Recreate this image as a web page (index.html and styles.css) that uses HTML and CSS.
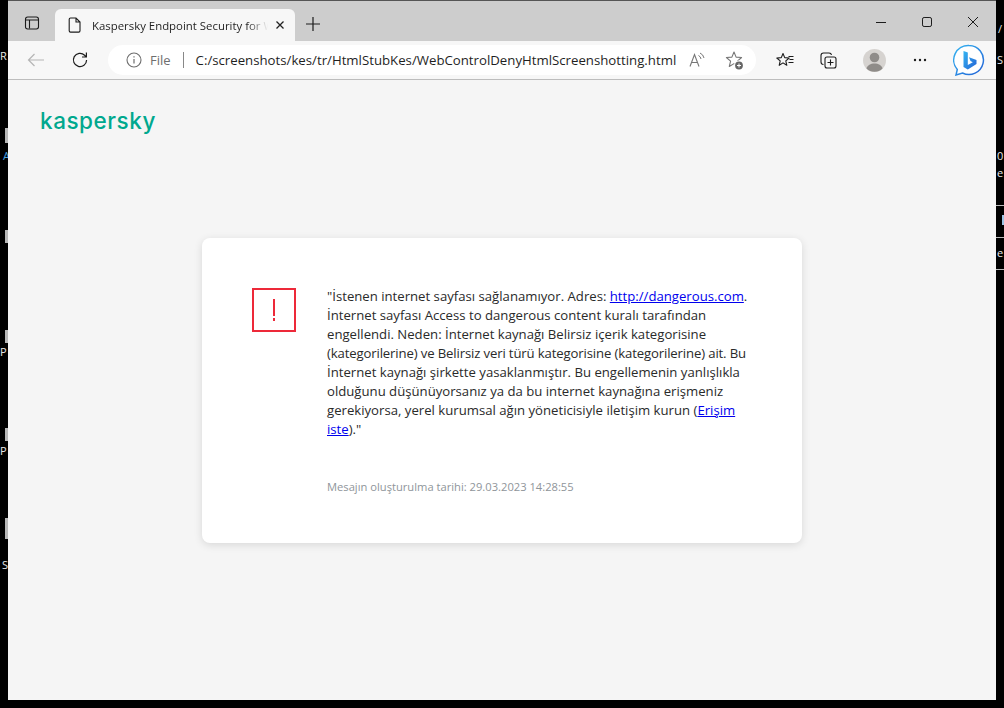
FILE: index.html
```html
<!DOCTYPE html>
<html lang="tr">
<head>
<meta charset="utf-8">
<title>Kaspersky Endpoint Security for Windows</title>
<link rel="stylesheet" href="styles.css">
</head>
<body>
<div class="desk">
  <span class="frag l1">R</span>
  <span class="bar b1"></span><span class="frag l2">A</span>
  <span class="bar b2"></span>
  <span class="bar b3"></span><span class="frag l3">P</span>
  <span class="bar b4"></span><span class="frag l4">P</span>
  <span class="bar b5"></span><span class="frag l5">S</span>
  <span class="frag r1">/</span>
  <span class="frag r2">S</span>
  <span class="frag r3">0</span>
  <span class="frag r4">e</span>
  <span class="rule ru1"></span><span class="rule ru2"></span><span class="rule ru3"></span><span class="rule ru4"></span>
  <span class="frag r5">e</span>
</div>
<main class="window">
  <header class="tabstrip">
    <svg class="ic tabs-ic" width="16" height="16" viewBox="0 0 16 16"><rect x="1.5" y="2" width="13" height="12" rx="2.2" fill="none" stroke="#1c1c1c" stroke-width="1.1"/><path d="M2 5h12M5.5 5v8.5" fill="none" stroke="#1c1c1c" stroke-width="1.1"/></svg>
    <div class="tab">
      <svg class="ic" width="14" height="16" viewBox="0 0 14 16"><path d="M2.500 1h5.500l4 4v8.800a1.300 1.300 0 0 1-1.300 1.300H2.500a1.300 1.300 0 0 1-1.300-1.300V2.300A1.300 1.300 0 0 1 2.500 1zM8 1v4h4" fill="none" stroke="#1c1c1c" stroke-width="1.100"/></svg>
      <span class="tab-title">Kaspersky Endpoint Security for Windows</span>
      <svg class="ic" width="10" height="10" viewBox="0 0 10 10"><path d="M1.500 1.500l7 7M8.500 1.500l-7 7" stroke="#222" stroke-width="1.300"/></svg>
    </div>
    <svg class="ic plus" width="16" height="16" viewBox="0 0 16 16"><path d="M8 1v14M1 8h14" stroke="#1c1c1c" stroke-width="1.200"/></svg>
    <div class="caption">
      <svg width="12" height="12" viewBox="0 0 12 12"><path d="M1 6.500h10" stroke="#1c1c1c" stroke-width="1"/></svg>
      <svg width="12" height="12" viewBox="0 0 12 12"><rect x="1.500" y="1.500" width="9" height="9" rx="1.600" fill="none" stroke="#1c1c1c" stroke-width="1"/></svg>
      <svg width="12" height="12" viewBox="0 0 12 12"><path d="M1 1l10 10M11 1L1 11" stroke="#1c1c1c" stroke-width="1"/></svg>
    </div>
  </header>
  <nav class="toolbar">
    <svg class="back" width="18" height="14" viewBox="0 0 18 14"><path d="M17 7H1.500M7.500 1L1.500 7l6 6" fill="none" stroke="#b5b5b5" stroke-width="1.200"/></svg>
    <svg class="reload" width="18" height="18" viewBox="0 0 18 18"><path d="M15.600 9a6.600 6.600 0 1 1-2-4.800l1.600 1.600M15.400 1.600v4.400h-4.400" fill="none" stroke="#1c1c1c" stroke-width="1.200"/></svg>
    <div class="omnibox">
      <svg width="16" height="16" viewBox="0 0 16 16"><circle cx="8" cy="8" r="7" fill="none" stroke="#6e6e6e" stroke-width="1.100"/><path d="M8 7v4.500M8 4.200v1.300" stroke="#6e6e6e" stroke-width="1.200"/></svg>
      <span class="scheme">File</span>
      <span class="divider"></span>
      <span class="url">C:/screenshots/kes/tr/HtmlStubKes/WebControlDenyHtmlScreenshotting.html</span>
      <svg class="read" width="17" height="16" viewBox="0 0 17 16"><path d="M1 14.500L5.500 2.500 10 14.500M2.600 10.500h5.800" fill="none" stroke="#777" stroke-width="1.100"/><path d="M9.500 3.500a4.500 4.500 0 0 1 2.500 3.500M11 1a7 7 0 0 1 4 5" fill="none" stroke="#777" stroke-width="1"/></svg>
      <svg class="favadd" width="19" height="19" viewBox="0 0 19 19"><path d="M9 1L11.100 6.100L16.600 6.500L12.400 10.100L13.700 15.500L9 12.600L4.300 15.500L5.600 10.100L1.400 6.500L6.900 6.100Z" fill="none" stroke="#777" stroke-width="1.100" stroke-linejoin="round"/><circle cx="14" cy="14.500" r="5" fill="#fff"/><circle cx="14" cy="14.500" r="3.900" fill="#666"/><path d="M14 12.500v4M12 14.500h4" stroke="#fff" stroke-width="1"/></svg>
    </div>
    <svg class="tool t-fav" width="18" height="16" viewBox="0 0 18 16"><path d="M7 1.500L8.700 5.600L13.200 6L9.800 8.900L10.800 13.300L7 10.900L3.200 13.300L4.200 8.900L.8 6L5.300 5.600Z" fill="none" stroke="#1c1c1c" stroke-width="1.100" stroke-linejoin="round"/><path d="M12.500 4.500h5M13.500 7.500h4M12.500 10.500h5" stroke="#1c1c1c" stroke-width="1"/></svg>
    <svg class="tool t-col" width="17" height="17" viewBox="0 0 17 17"><path d="M3.500 12.500C2 12.500 1 11.500 1 10V3.500C1 2 2 1 3.500 1H9c1.300 0 2.300.8 2.500 2" fill="none" stroke="#1c1c1c" stroke-width="1.100"/><rect x="5" y="5" width="11" height="11" rx="2" fill="none" stroke="#1c1c1c" stroke-width="1.100"/><path d="M10.500 7.500v6M7.500 10.500h6" stroke="#1c1c1c" stroke-width="1.100"/></svg>
    <svg class="tool t-avatar" width="23" height="23" viewBox="0 0 23 23"><circle cx="11.500" cy="11.500" r="11.500" fill="#d6d3d0"/><circle cx="11.500" cy="8.500" r="4.800" fill="#8f8c89"/><path d="M3.500 19.500c1-3.500 4-5 8-5s7 1.500 8 5a11.500 11.500 0 0 1-16 0z" fill="#8f8c89"/></svg>
    <svg class="tool t-more" width="14" height="4" viewBox="0 0 14 4"><circle cx="2" cy="2" r="1.200" fill="#1c1c1c"/><circle cx="7" cy="2" r="1.200" fill="#1c1c1c"/><circle cx="12" cy="2" r="1.200" fill="#1c1c1c"/></svg>
    <svg class="tool t-bing" width="32" height="32" viewBox="0 0 32 32"><defs><linearGradient id="bg" x1="0" y1="0" x2="1" y2="1"><stop offset="0" stop-color="#35b5f1"/><stop offset="1" stop-color="#2463d6"/></linearGradient></defs><path d="M16 1.500a14.500 14.500 0 1 1-6.500 27.500L3 31l1.300-5.500A14.500 14.500 0 0 1 16 1.500z" fill="#fff" stroke="url(#bg)" stroke-width="1.500"/><path d="M10.500 7l4.300 1.500v12.500l5-2.700-2.300-1.200-1.500-3.800 7.500 2.800v4L14.800 25.500l-4.300-2.500z" fill="url(#bg)"/></svg>
  </nav>
  <section class="page">
    <div class="logo">kaspersky</div>
    <div class="card">
      <div class="alert"><span class="alert-mark"></span><span class="alert-dot"></span></div>
      <div class="copy">
        <p class="msg">"İstenen internet sayfası sağlanamıyor. Adres: <a href="#">http://dangerous.com</a>.<br>
        İnternet sayfası Access to dangerous content kuralı tarafından<br>
        engellendi. Neden: İnternet kaynağı Belirsiz içerik kategorisine<br>
        <span class="tight">(kategorilerine) ve Belirsiz veri türü kategorisine (kategorilerine) ait. Bu</span><br>
        İnternet kaynağı şirkette yasaklanmıştır. Bu engellemenin yanlışlıkla<br>
        olduğunu düşünüyorsanız ya da bu internet kaynağına erişmeniz<br>
        gerekiyorsa, yerel kurumsal ağın yöneticisiyle iletişim kurun (<a href="#">Erişim<br>iste</a>)."</p>
        <p class="stamp">Mesajın oluşturulma tarihi: 29.03.2023 14:28:55</p>
      </div>
    </div>
  </section>
</main>
</body>
</html>
```
FILE: styles.css
```css
* { box-sizing: border-box; }
html, body { margin: 0; height: 100%; }
body {
  background: #000;
  width: 1004px;
  height: 708px;
  overflow: hidden;
  position: relative;
  font-family: "Open Sans", "Noto Sans", sans-serif;
}
.desk { position: absolute; inset: 0; color: #e8e8e8; font-size: 11px; }
.frag { position: absolute; line-height: 14px; font-family: "Open Sans", sans-serif; }
.bar { position: absolute; left: 5px; width: 3px; height: 13px; background: #b8b8b8; }
.rule { position: absolute; left: 996px; width: 8px; height: 1px; background: #bbb; }
.l1 { left: 0; top: 49px; }
.b1 { top: 128px; height: 15px; }
.l2 { left: 3px; top: 149px; color: #4aa3e0; }
.b2 { top: 230px; }
.b3 { top: 330px; }
.l3 { left: 0; top: 345px; }
.b4 { top: 428px; }
.l4 { left: 0; top: 444px; }
.b5 { top: 518px; height: 21px; }
.l5 { left: 2px; top: 558px; }
.r1 { left: 998px; top: 22px; }
.r2 { left: 997px; top: 53px; }
.r3 { left: 997px; top: 149px; }
.r4 { left: 997px; top: 166px; }
.ru1 { top: 205px; }
.ru2 { top: 237px; }
.ru3 { top: 269px; }
.r5 { left: 997px; top: 246px; }
.ru4 { top: 215px; height: 10px; width: 2px; left: 1002px; background: #9cc4e4; }

.window {
  position: absolute;
  left: 8px;
  top: 0;
  width: 988px;
  height: 700px;
  display: flex;
  flex-direction: column;
  background: #f5f5f5;
  border-top: 1px solid #555;
}
.tabstrip {
  height: 40px;
  flex: none;
  background: #cdcdcd;
  display: flex;
  align-items: flex-end;
  padding-left: 16px;
  position: relative;
}
.ic { flex: none; }
.tabs-ic { margin: 0 15px 10px 0; }
.tab {
  width: 240px;
  height: 32px;
  background: #f7f7f7;
  border-radius: 6px 6px 0 0;
  display: flex;
  align-items: center;
  padding: 0 13px;
  font-size: 11.4px;
  color: #1f1f1f;
}
.tab-title {
  width: 176px;
  margin: 0 7px 0 10px;
  overflow: hidden;
  white-space: nowrap;
  flex: none;
  -webkit-mask-image: linear-gradient(to right, #000 88%, transparent);
  mask-image: linear-gradient(to right, #000 88%, transparent);
}
.plus { margin: 0 0 9px 10px; }
.caption {
  margin-left: auto;
  align-self: flex-start;
  display: flex;
  gap: 34px;
  padding: 15px 17px 0 0;
}
.caption svg { display: block; }
.toolbar {
  height: 39px;
  flex: none;
  background: #f7f7f7;
  border-bottom: 1px solid #bdbdbd;
  display: flex;
  align-items: center;
  position: relative;
  padding-left: 19px;
}
.back { margin-right: 26px; }
.reload { margin-right: 19px; }
.omnibox {
  width: 648px;
  height: 30px;
  background: #fff;
  border-radius: 15px;
  display: flex;
  align-items: center;
  padding-left: 18px;
  font-size: 13px;
  flex: none;
}
.scheme { color: #6e6e6e; margin-left: 8px; }
.divider { width: 1px; height: 16px; background: #888; margin: 0 12px; }
.url { color: #1f1f1f; white-space: nowrap; font-size: 13.22px; }
.read { margin-left: 13px; flex: none; }
.favadd { margin-left: 19px; flex: none; }
.tool { flex: none; }
.t-fav { margin-left: 20px; }
.t-col { margin-left: 26px; }
.t-avatar { margin-left: 26px; }
.t-more { margin-left: 27px; }
.t-bing { margin-left: 26px; }

.page {
  flex: 1;
  background: #f5f5f5;
  padding: 24px 0 0 32px;
  position: relative;
}
.logo {
  font-family: "Inter", sans-serif;
  font-size: 22.5px;
  line-height: 33px;
  font-weight: 500;
  letter-spacing: 0.55px;
  color: #00a88e;
  height: 36px;
}
.card {
  width: 600px;
  height: 305px;
  margin: 98px 0 0 162px;
  background: #fff;
  border-radius: 8px;
  box-shadow: 0 2px 8px rgba(0,0,0,.12);
  display: flex;
  padding: 49px 0 0 50px;
}
.alert {
  width: 44px;
  height: 44px;
  margin-top: 1px;
  border: 2px solid #ed2939;
  flex: none;
  display: flex;
  flex-direction: column;
  align-items: center;
  padding-top: 9px;
}
.alert-mark { width: 2px; height: 17px; background: #ed2939; }
.alert-dot { width: 2px; height: 3px; margin-top: 2px; background: #ed2939; }
.copy { margin-left: 31px; width: 440px; }
.msg {
  margin: 0;
  font-size: 13.17px;
  line-height: 19px;
  color: #2a2a2a;
  white-space: nowrap;
}
.msg a { color: #0000ee; text-decoration: underline; }
.tight { letter-spacing: -0.14px; }
.stamp {
  margin: 40px 0 0;
  font-size: 11.18px;
  line-height: 16px;
  color: #8f959a;
}
```
